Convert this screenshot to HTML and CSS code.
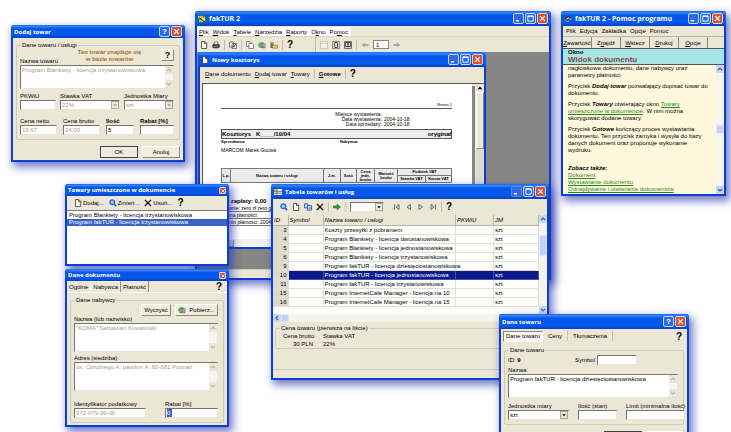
FILE: index.html
```html
<!DOCTYPE html>
<html lang="pl">
<head>
<meta charset="utf-8">
<title>fakTUR 2</title>
<link rel="stylesheet" href="styles.css">
</head>
<body>
<svg class="defs" aria-hidden="true">
  <symbol id="min" viewBox="0 0 10 10"><path d="M2 7.5h3.6" stroke="#fff" stroke-width="1.6"/></symbol>
  <symbol id="max" viewBox="0 0 10 10"><path d="M2 2h6v6H2zM2 2.8h6" fill="none" stroke="#fff" stroke-width="1"/></symbol>
  <symbol id="close" viewBox="0 0 10 10"><path d="M2.4 2.4l5.2 5.2M7.6 2.4L2.4 7.6" stroke="#fff" stroke-width="1.4"/></symbol>
  <symbol id="up" viewBox="0 0 8 8"><path d="M2 5l2-2 2 2" fill="none" stroke="currentColor" stroke-width="1.2"/></symbol>
  <symbol id="down" viewBox="0 0 8 8"><path d="M2 3l2 2 2-2" fill="none" stroke="currentColor" stroke-width="1.2"/></symbol>
  <symbol id="left" viewBox="0 0 8 8"><path d="M5 2L3 4l2 2" fill="none" stroke="currentColor" stroke-width="1.2"/></symbol>
  <symbol id="tri" viewBox="0 0 8 8"><path d="M1.6 3h4.8L4 5.6z" fill="currentColor"/></symbol>
  <symbol id="triup" viewBox="0 0 8 8"><path d="M1.6 5.2h4.8L4 2.6z" fill="currentColor"/></symbol>
  <symbol id="page" viewBox="0 0 8 8"><path d="M1.5.5h3.3l1.900 1.900v5.100H1.500zM4.600.600v2h2" fill="#fff" stroke="#333" stroke-width=".8"/></symbol>
  <symbol id="print" viewBox="0 0 9 8"><path d="M3 .6h4L6 3.400H2z" fill="#fff" stroke="#333" stroke-width=".7"/><path d="M1.400 3h6.600l.7 1.200v2.200L7.400 7.600H1.200L.3 6.400V4.200z" fill="#444"/><path d="M1.400 5.600h5" stroke="#bbb" stroke-width=".6"/></symbol>
  <symbol id="preview" viewBox="0 0 8 8"><path d="M.6 1h4v5h-4zM3 2.600h4.400v5H3z" fill="#fff" stroke="#444" stroke-width=".7"/><path d="M3.400 4.600l1.200 1.600 2.400-3.600" fill="none" stroke="#333" stroke-width=".9"/></symbol>
  <symbol id="copy" viewBox="0 0 8 8"><path d="M.6.6h3.200l1 1v4H.6z" fill="#fff" stroke="#456" stroke-width=".7"/><path d="M3 2.400h3.200l1.200 1.200v4H3z" fill="#fff" stroke="#456" stroke-width=".7"/></symbol>
  <symbol id="copyblue" viewBox="0 0 8 8"><path d="M.5.8h3.400v4H.5z" fill="#cfdcff" stroke="#2347b8" stroke-width=".8"/><path d="M3.400 2.600h4.100v4.600H3.400z" fill="#dfe8ff" stroke="#2347b8" stroke-width=".8"/><path d="M4.400 4.200h2.200M4.400 5.600h2.200" stroke="#2347b8" stroke-width=".6"/></symbol>
  <symbol id="globe" viewBox="0 0 8 8"><circle cx="3.400" cy="4" r="3.100" fill="#5da33c"/><path d="M1 3c1-2 2-1.600 3-2M1.400 5.600l2-1" stroke="#b8dc94" stroke-width=".8" fill="none"/><path d="M4 2.400h3.400v4.800H4z" fill="#7d76b0"/><path d="M4.800 3.600h2M4.800 5h2" stroke="#c8e08a" stroke-width=".7"/></symbol>
  <symbol id="box" viewBox="0 0 8 8"><path d="M.5 1h3v6h-3z" fill="#6d6848"/><path d="M1 1.600h2v1H1z" fill="#d6cf90"/><path d="M2.500 4.200h5v3h-5z" fill="#e6c98a" stroke="#7d6b42" stroke-width=".6"/></symbol>
  <symbol id="lens" viewBox="0 0 8 8"><path d="M4.800 4.800l2.400 2.400" stroke="#234a9c" stroke-width="1.500"/><circle cx="3.300" cy="3.300" r="2.400" fill="#8ecbf4" stroke="#2168d8" stroke-width="1.200"/></symbol>
  <symbol id="cross" viewBox="0 0 8 8"><path d="M1 1l6 6M7 .8L.8 7" stroke="#111" stroke-width="1.200"/></symbol>
  <symbol id="go" viewBox="0 0 9 8"><path d="M.5 2.800h4V.8L8.500 4 4.500 7.200v-2h-4z" fill="#2aa52a" stroke="#146c14" stroke-width=".6"/></symbol>
  <symbol id="back" viewBox="0 0 9 8"><path d="M8.500 3H4.500V1.200L.8 4l3.700 2.800V5h4z" fill="#aaa69a"/></symbol>
  <symbol id="fwd" viewBox="0 0 9 8"><path d="M.5 3h4V1.200L8.200 4 4.500 6.800V5h-4z" fill="#aaa69a"/></symbol>
  <symbol id="v1" viewBox="0 0 8 8"><path d="M.5.5h7v7h-7zM.5 2.500h7" fill="#f4f0e2" stroke="#c3bda8" stroke-width=".8"/></symbol>
  <symbol id="v2" viewBox="0 0 8 8"><path d="M.5.5h7v7h-7z" fill="#ddd9cb" stroke="#777" stroke-width=".8"/><path d="M2.800 1.500h2.600v5H2.800z" fill="#fff" stroke="#222" stroke-width=".8"/></symbol>
  <symbol id="v3" viewBox="0 0 8 8"><path d="M.5.5h7v7h-7z" fill="#ddd9cb" stroke="#555" stroke-width=".8"/><path d="M1.500 1.500H4v4H1.500zM4 1.500h2.500v4H4z" fill="#fff" stroke="#222" stroke-width=".8"/></symbol>
  <symbol id="first" viewBox="0 0 8 8"><path d="M1.500 1.500v5M6 1.500L3 4l3 2.500z" fill="none" stroke="#444" stroke-width=".8"/></symbol>
  <symbol id="prev" viewBox="0 0 8 8"><path d="M5.500 1.500L2 4l3.500 2.500z" fill="none" stroke="#444" stroke-width=".8"/></symbol>
  <symbol id="next" viewBox="0 0 8 8"><path d="M2 1.500L5.500 4 2 6.500z" fill="none" stroke="#444" stroke-width=".8"/></symbol>
  <symbol id="last" viewBox="0 0 8 8"><path d="M6.500 1.500v5M2 1.500L5 4 2 6.500z" fill="none" stroke="#444" stroke-width=".8"/></symbol>
  <symbol id="app" viewBox="0 0 8 8"><path d="M0 0h8v8H0z" fill="#3b6f3c"/><path d="M0 1h5v2.500H0z" fill="#e2bb3e"/><path d="M1 4.500h3v2.500H1z" fill="#7fc0ea"/><path d="M4 3.500l3-2v4l-3 1.500z" fill="#d8d8a0"/><path d="M1 2.500l5 4" stroke="#222" stroke-width=".8"/></symbol>
  <symbol id="book" viewBox="0 0 8 8"><path d="M.5 3.500l4-2.800 3 2-3.800 4.500z" fill="#33304a"/><path d="M2.200 3.400l2.400-1.500 1.200 1-2.400 2z" fill="#e3a24a"/><path d="M.5 3.800L3.600 7l3.900-4" stroke="#ddd" stroke-width=".7" fill="none"/></symbol>
  <symbol id="grid" viewBox="0 0 8 8"><path d="M0 1h8v6H0z" fill="#f6f1d4"/><path d="M0 1h3v2H0z" fill="#eab63f"/><path d="M0 3.400h8M0 5.200h8M3 1v6" stroke="#55554a" stroke-width=".7"/></symbol>
</svg>
<main class="desktop">

  <section class="win faktur">
    <header class="title"><svg class="ico"><use href="#app"/></svg><h1>fakTUR 2</h1>
      <button class="cap" aria-label="Minimalizuj"><svg><use href="#min"/></svg></button><button class="cap" aria-label="Maksymalizuj"><svg><use href="#max"/></svg></button><button class="cap red" aria-label="Zamknij"><svg><use href="#close"/></svg></button></header>
    <nav class="menu"><div class="menu-items"><button><u>P</u>lik</button><button><u>W</u>idok</button><button><u>T</u>abele</button><button><u>N</u>arzędzia</button><button><u>R</u>aporty</button><button>O<u>k</u>no</button><button>Po<u>m</u>oc</button></div></nav>
    <div class="bar main-bar">
      <button aria-label="Nowy"><svg class="ico"><use href="#page"/></svg></button>
      <button aria-label="Drukuj"><svg class="ico"><use href="#print"/></svg></button>
      <i class="sep"></i>
      <button aria-label="Podgląd"><svg class="ico"><use href="#preview"/></svg></button>
      <i class="sep"></i>
      <button aria-label="Dokumenty"><svg class="ico"><use href="#copy"/></svg></button>
      <button aria-label="Kontrahenci"><svg class="ico"><use href="#globe"/></svg></button>
      <button aria-label="Towary"><svg class="ico"><use href="#box"/></svg></button>
      <i class="sep"></i>
      <button class="help">?</button>
      <i class="sep wide"></i>
      <button aria-label="Szerokość"><svg class="ico"><use href="#v1"/></svg></button>
      <button aria-label="Strona"><svg class="ico"><use href="#v2"/></svg></button>
      <button aria-label="Dwie strony"><svg class="ico"><use href="#v3"/></svg></button>
      <i class="sep"></i>
      <button aria-label="Wstecz"><svg class="ico"><use href="#back"/></svg></button>
      <input class="num" aria-label="Numer strony" value="1">
      <button aria-label="Dalej"><svg class="ico"><use href="#fwd"/></svg></button>
    </div>
    <div class="mdi"></div>
    <footer class="status"></footer>
  </section>

  <section class="win kosztorys">
    <header class="title"><svg class="ico"><use href="#page"/></svg><h2>Nowy kosztorys</h2>
      <button class="cap" aria-label="Minimalizuj"><svg><use href="#min"/></svg></button><button class="cap" aria-label="Maksymalizuj"><svg><use href="#max"/></svg></button><button class="cap red" aria-label="Zamknij"><svg><use href="#close"/></svg></button></header>
    <div class="bar doc-bar"><button><span><u>D</u>ane dokumentu</span></button><button><span><u>D</u>odaj towar</span></button><button><span><u>T</u>owary</span></button><i class="sep"></i><button><b><u>G</u>otowe</b></button><i class="sep"></i><button class="help">?</button></div>
    <div class="doc-view">
      <article class="sheet">
        <div class="page-no">Strona 1</div>
        <dl class="meta"><dt>Miejsce wystawienia:</dt><dd></dd><dt>Data wystawienia:</dt><dd>2004-10-18</dd><dt>Data sprzedaży:</dt><dd>2004-10-18</dd></dl>
        <h3 class="doc-head"><span>Kosztorys &nbsp; K____/10/04</span><span>oryginał</span></h3>
        <div class="parties"><span>Sprzedawca:</span><span>Nabywca:</span></div>
        <p class="seller">MARCOM Marek Gucwa</p>
        <table class="items">
          <colgroup><col class="c1"><col><col class="c3"><col class="c4"><col class="c5"><col class="c6"><col class="c7"><col class="c8"></colgroup>
          <tr><th rowspan="2">L.p.</th><th rowspan="2">Nazwa towaru i usługi</th><th rowspan="2">J.m.</th><th rowspan="2">Ilość</th><th rowspan="2">Cena jedn. brutto</th><th rowspan="2">Wartość brutto</th><th colspan="2">Podatek VAT</th></tr>
          <tr><th>Stawka VAT</th><th>Kwota VAT</th></tr>
        </table>
        <p class="total">Do zapłaty: 0,00</p>
        <p class="line">Słownie: zero zł zero gr</p>
        <p class="line">Forma płatności:</p>
        <p class="line">Termin płatności: 2004-10-18</p>
      </article>
      <div class="page-shade"></div>
      <div class="vscroll classic"><svg><use href="#triup"/></svg><i class="thumb"></i></div>
    </div>
    <div class="hscroll classic"><i class="thumb"></i></div>
  </section>

  <section class="win dodaj">
    <header class="title"><h2>Dodaj towar</h2><button class="cap" aria-label="Pomoc"><span>?</span></button><button class="cap red" aria-label="Zamknij"><svg><use href="#close"/></svg></button></header>
    <form class="form">
      <fieldset>
        <legend>Dane towaru / usługi</legend>
        <div class="lead"><label for="nazwa">Nazwa towaru</label><strong>Ten towar znajduje się<br>w bazie towarów</strong><button type="button" class="btn square">?</button></div>
        <div class="area dim"><textarea id="nazwa">Program Blankiety - licencja trzystanowiskowa</textarea><div class="asb"><svg><use href="#up"/></svg><svg><use href="#down"/></svg></div></div>
        <div class="fields f-a">
          <div><label for="pkwiu">PKWiU</label><input id="pkwiu"></div>
          <div><label for="vat">Stawka VAT</label><div class="sel dim"><select id="vat"><option>22%</option></select><svg><use href="#tri"/></svg></div></div>
          <div><label for="jm">Jednostka Miary</label><div class="sel dim"><select id="jm"><option>szt</option></select><svg><use href="#tri"/></svg></div></div>
        </div>
        <div class="fields f-b">
          <div class="dim"><label for="netto">Cena netto</label><input id="netto" value="19,67"></div>
          <div class="dim"><label for="brutto">Cena brutto</label><input id="brutto" value="24,00"></div>
          <div><label for="ilosc"><b>Ilość</b></label><input id="ilosc" value="5"></div>
          <div><label for="rabat"><b>Rabat [%]</b></label><input id="rabat"></div>
        </div>
      </fieldset>
      <div class="actions"><button type="button" class="btn default">OK</button><button type="button" class="btn">Anuluj</button></div>
    </form>
  </section>

  <section class="win tabela">
    <header class="title"><svg class="ico"><use href="#grid"/></svg><h2>Tabela towarów i usług</h2>
      <button class="cap off" aria-label="Minimalizuj"><svg><use href="#min"/></svg></button><button class="cap" aria-label="Maksymalizuj"><svg><use href="#max"/></svg></button><button class="cap red" aria-label="Zamknij"><svg><use href="#close"/></svg></button></header>
    <div class="bar tab-bar">
      <button aria-label="Szukaj"><svg class="ico"><use href="#lens"/></svg></button>
      <button aria-label="Nowy"><svg class="ico"><use href="#page"/></svg></button>
      <button aria-label="Kopiuj"><svg class="ico"><use href="#copyblue"/></svg></button>
      <button aria-label="Usuń"><svg class="ico"><use href="#cross"/></svg></button>
      <i class="sep"></i>
      <button aria-label="Przejdź"><svg class="ico"><use href="#go"/></svg></button>
      <i class="sep"></i>
      <div class="sel"><select aria-label="Filtr"><option></option></select><svg><use href="#tri"/></svg></div>
      <i class="sep none"></i>
      <button aria-label="Pierwszy"><svg class="ico"><use href="#first"/></svg></button>
      <button aria-label="Poprzedni"><svg class="ico"><use href="#prev"/></svg></button>
      <button aria-label="Następny"><svg class="ico"><use href="#next"/></svg></button>
      <button aria-label="Ostatni"><svg class="ico"><use href="#last"/></svg></button>
      <i class="sep"></i>
      <button class="help">?</button>
    </div>
    <div class="grid-wrap">
      <div class="grid-main"><table class="goods">
        <colgroup><col class="g1"><col class="g2"><col><col class="g4"><col class="g5"></colgroup>
        <thead><tr><th>ID</th><th>Symbol</th><th>Nazwa towaru / usługi</th><th>PKWiU</th><th>JM</th></tr></thead>
        <tbody>
          <tr><td>3</td><td></td><td>Koszty przesyłki z pobraniem</td><td></td><td>szt</td></tr>
          <tr><td>4</td><td></td><td>Program Blankiety - licencja dwustanowiskowa</td><td></td><td>szt</td></tr>
          <tr><td>5</td><td></td><td>Program Blankiety - licencja jednostanowiskowa</td><td></td><td>szt</td></tr>
          <tr><td>6</td><td></td><td>Program Blankiety - licencja trzystanowiskowa</td><td></td><td>szt</td></tr>
          <tr><td>9</td><td></td><td>Program fakTUR - licencja dziesięciostanowiskowa</td><td></td><td>szt</td></tr>
          <tr class="on"><td>10</td><td></td><td>Program fakTUR - licencja jednostanowiskowa</td><td></td><td>szt</td></tr>
          <tr><td>11</td><td></td><td>Program fakTUR - licencja trzystanowiskowa</td><td></td><td>szt</td></tr>
          <tr><td>15</td><td></td><td>Program InternetCafe Manager - licencja na 10</td><td></td><td>szt</td></tr>
          <tr><td>16</td><td></td><td>Program InternetCafe Manager - licencja na 15</td><td></td><td>szt</td></tr>
        </tbody>
      </table></div>
      <div class="vscroll xp"><svg><use href="#up"/></svg><i class="thumb"></i><svg><use href="#down"/></svg></div>
    </div>
    <div class="hscroll xp"><svg><use href="#left"/></svg><i class="thumb"></i></div>
    <div class="price">
      <fieldset><legend>Cena towaru (pierwsza na liście)</legend>
        <dl><dt>Cena brutto</dt><dt>Stawka VAT</dt><dd>30 PLN</dd><dd>22%</dd></dl>
      </fieldset>
    </div>
    <footer class="status"></footer>
  </section>

  <section class="win small towary">
    <header class="title"><h2>Towary umieszczone w dokumencie</h2><button class="cap red" aria-label="Zamknij"><svg><use href="#close"/></svg></button></header>
    <div class="bar list-bar"><button><svg class="ico"><use href="#page"/></svg>Dodaj...</button><button><svg class="ico"><use href="#lens"/></svg>Zmień...</button><button><svg class="ico"><use href="#cross"/></svg>Usuń...</button><button class="help">?</button></div>
    <ul class="list"><li>Program Blankiety - licencja trzystanowiskowa</li><li class="on">Program fakTUR - licencja trzystanowiskowa</li></ul>
  </section>

  <section class="win small nabywca">
    <header class="title"><h2>Dane dokumentu</h2><button class="cap red" aria-label="Zamknij"><svg><use href="#close"/></svg></button></header>
    <div class="tabs"><button>Ogólne</button><button class="on">Nabywca</button><button class="edge">Płatność</button><button class="help">?</button></div>
    <form class="form">
      <fieldset>
        <legend>Dane nabywcy</legend>
        <div class="pick"><button type="button" class="btn">Wyczyść</button><button type="button" class="btn"><svg class="ico"><use href="#globe"/></svg>Pobierz...</button></div>
        <label for="nab">Nazwa (lub nazwisko)</label>
        <div class="area tall dim"><textarea id="nab">"KOMA" Sebastian Kowaliński</textarea><div class="asb"><svg><use href="#up"/></svg><svg><use href="#down"/></svg></div></div>
        <label for="adr" class="second">Adres (siedziba)</label>
        <div class="area tall dim"><textarea id="adr">os. Chrobrego A, pawilon A, 60-681 Poznań</textarea><div class="asb"><svg><use href="#up"/></svg><svg><use href="#down"/></svg></div></div>
        <div class="fields f-c">
          <div class="dim"><label for="nip">Identyfikator podatkowy</label><input id="nip" value="972-079-99-06"></div>
          <div><label for="rab2">Rabat [%]</label><div class="fake"><input id="rab2" class="marked" value="0" size="1"></div></div>
        </div>
      </fieldset>
    </form>
  </section>

  <section class="win towar">
    <header class="title"><h2>Dane towaru</h2><button class="cap" aria-label="Pomoc"><span>?</span></button><button class="cap red" aria-label="Zamknij"><svg><use href="#close"/></svg></button></header>
    <div class="tabs flat"><button class="on">Dane towaru</button><button>Ceny</button><i class="sep"></i><button>Tłumaczenia</button><i class="sep"></i><button class="help">?</button></div>
    <form class="form">
      <fieldset>
        <legend>Dane towaru</legend>
        <div class="idrow"><span>ID: <b>9</b></span><label for="sym">Symbol</label><input id="sym"></div>
        <label for="naz2">Nazwa</label>
        <div class="area"><textarea id="naz2">Program fakTUR - licencja dziesięciostanowiskowa</textarea><div class="asb"><svg><use href="#up"/></svg><svg><use href="#down"/></svg></div></div>
        <div class="fields f-d">
          <div><label for="jm2">Jednostka miary</label><div class="sel"><select id="jm2"><option>szt</option></select><svg><use href="#tri"/></svg></div></div>
          <div><label for="stan">Ilość (stan)</label><input id="stan"></div>
          <div><label for="lim">Limit (minimalna ilość)</label><input id="lim"></div>
        </div>
      </fieldset>
      <div class="actions"><button type="button" class="btn default" aria-label="OK"></button><button type="button" class="btn" aria-label="Anuluj"></button></div>
    </form>
  </section>

  <section class="win pomoc">
    <header class="title"><svg class="ico"><use href="#book"/></svg><h2>fakTUR 2 - Pomoc programu</h2>
      <button class="cap" aria-label="Minimalizuj"><svg><use href="#min"/></svg></button><button class="cap" aria-label="Maksymalizuj"><svg><use href="#max"/></svg></button><button class="cap red" aria-label="Zamknij"><svg><use href="#close"/></svg></button></header>
    <nav class="menu beige"><button>Plik</button><button>Edycja</button><button>Zakładka</button><button>Opcje</button><button>Pomoc</button></nav>
    <div class="hbuttons"><button><u>Z</u>awartość</button><button>Z<u>n</u>ajdź</button><button><u>W</u>stecz</button><button><u>D</u>rukuj</button><button><u>O</u>pcje</button></div>
    <div class="topic"><p>Okno</p><h3>Widok dokumentu</h3></div>
    <div class="help-body">
      <div class="help-text">
        <p>nagłówkowe dokumentu, dane nabywcy oraz<br>parametry płatności.</p>
        <p>Przycisk <b><em>Dodaj towar</em></b> pozwalający dopisać towar do<br>dokumentu.</p>
        <p>Przycisk <b><em>Towary</em></b> otwierający okno <a href="#towary">Towary<br>umieszczone w dokumencie</a>. W nim można<br>skorygować dodane towary.</p>
        <p>Przycisk <b><em>Gotowe</em></b> kończący proces wystawiania<br>dokumentu. Ten przycisk zamyka i wysyła do bazy<br>danych dokument oraz proponuje wykonanie<br>wydruku.</p>
        <p class="also"><b><em>Zobacz także:</em></b><br><a href="#dokument">Dokument</a><br><a href="#wystawianie">Wystawianie dokumentu</a><br><a href="#odnajdywanie">Odnajdywanie i otwieranie dokumentów</a></p>
      </div>
      <div class="vscroll xp mid"><svg><use href="#up"/></svg><i class="thumb"></i><svg><use href="#down"/></svg></div>
    </div>
  </section>
</main>
</body>
</html>
```
FILE: styles.css
```css
:root {
  --ui: "Liberation Sans", sans-serif;
  --beige: #ece6d6;
  --blue: #0a3fd0;
}
* { box-sizing: border-box; margin: 0; padding: 0; }
body { background: #fff; font: 6px/8px var(--ui); color: #000; }
button, input, select, textarea { font: inherit; color: inherit; border: 0; background: none; }
textarea { resize: none; display: block; overflow: hidden; }
svg { display: block; width: 8px; height: 8px; flex: none; }
.defs { position: absolute; width: 0; height: 0; }
h1, h2, h3 { font-size: inherit; }
.desktop { position: relative; min-height: 100vh; overflow: hidden; }

/* windows */
.win {
  position: absolute; display: flex; flex-direction: column;
  background: var(--beige); border: 2px solid var(--blue); border-top: 0;
  border-radius: 3px 3px 0 0;
  box-shadow: 3px 4px 8px 1px rgba(40, 50, 170, .65);
}
.faktur { left: 195px; top: 11px; width: 356px; height: 269px; }
.kosztorys { left: 198px; top: 52px; width: 288px; height: 197px; box-shadow: none; }
.dodaj { left: 11px; top: 25px; width: 174px; height: 137px; }
.tabela { left: 271px; top: 184px; width: 278px; height: 196px; }
.towary { left: 65px; top: 184px; width: 164px; height: 82px; }
.nabywca { left: 65px; top: 269px; width: 164px; height: 158px; }
.towar { left: 499px; top: 314px; width: 190px; height: 134px; }
.pomoc { left: 561px; top: 11px; width: 165px; height: 185px; }

.title {
  display: flex; align-items: center; gap: 1px; height: 15px; flex: none;
  margin: 0 -2px; padding: 0 3px; border-radius: 3px 3px 0 0; color: #fff;
  background: linear-gradient(#1c62e6, #2f86ff 12%, #0555e8 28%, #0459ee 75%, #0241c0);
}
.title h1, .title h2 { flex: 1; font: bold 6px/10px "Open Sans", sans-serif; white-space: nowrap; padding-left: 2px; }
.title h1, .pomoc .title h2 { font-size: 7px; }
.dodaj .title h2, .small .title h2, .towar .title h2 { padding-left: 0; }
.dodaj .title { height: 13px; }
.small .title { height: 12px; }
.cap {
  width: 11px; height: 11px; border: 1px solid #c6d6fa; border-radius: 2px; flex: none;
  background: #2f68e4; display: grid; place-items: center; font: bold 8px/9px "Liberation Sans", sans-serif;
}
.cap svg { width: 9px; height: 9px; }
.cap.red { background: #dd4f2b; }
.cap.off { border-color: #5c86ea; }
.small .cap { width: 7px; height: 7px; border-radius: 1px; }
.small .cap svg { width: 6px; height: 6px; }

/* menus and bars */
.menu { display: flex; height: 10px; align-items: center; flex: none; }
.menu-items { display: flex; background: #fff; gap: 4px; padding: 1px 3px 0 2px; height: 9px; }
.menu.beige { gap: 4px; padding-left: 3px; }
.bar { display: flex; align-items: center; flex: none; height: 15px; gap: 5px; white-space: nowrap; }
.bar button { display: flex; align-items: center; gap: 1px; }
.bar .help, .tabs .help { font: bold 10px/12px "Liberation Sans", sans-serif; }
.sep { width: 1px; height: 10px; background: #c5c0ac; }
.main-bar { padding-left: 3px; height: 16px; gap: 4px; border-top: 1px solid #d8d4c2; }
.main-bar .wide { margin: 0 0 0 18px; height: 15px; }
.main-bar .num { width: 16px; height: 9px; background: #fff; border: 1px solid #8a8778; padding-left: 2px; }
.mdi { flex: 1; background: #868686; }
.status { height: 9px; flex: none; border-top: 1px solid #cfcab6; }
.doc-bar { padding-left: 5px; height: 14px; gap: 4px; }

/* document */
.doc-view { flex: 1; display: flex; min-height: 0; overflow: hidden; margin: 2px 0 0 2px; border-top: 1px solid #555; border-left: 1px solid #555; }
.sheet { flex: 1; background: #fff; padding: 16px 20px 0 18px; font: 5px/6px "Liberation Sans", sans-serif; }
.page-no { text-align: right; border-bottom: 1px solid #555; height: 9px; padding-top: 2px; font-size: 4px; }
.meta { display: grid; grid-template-columns: 161px 1fr; column-gap: 2px; grid-auto-rows: 5px; line-height: 5px; padding-top: 3px; }
.meta dt { text-align: right; }
.doc-head { display: flex; justify-content: space-between; border: 1px solid #555; background: #ececec; margin-top: 2px; font: bold 6px/8px "Liberation Sans", sans-serif; }
.parties { display: grid; grid-template-columns: 119px 1fr; font-size: 4px; font-weight: bold; }
.seller { height: 23px; padding-top: 2px; }
.items { width: 100%; border-collapse: collapse; table-layout: fixed; background: #ececec; font-size: 4px; line-height: 4px; }
.items th { border: 1px solid #777; height: 7px; overflow: hidden; }
.c1 { width: 9px; } .c3 { width: 17px; } .c4 { width: 16px; } .c5 { width: 18px; } .c6 { width: 23px; } .c7 { width: 28px; } .c8 { width: 26px; }
.total { font: bold 6px/8px "Liberation Sans", sans-serif; margin-top: 14px; }
.line { line-height: 6px; border-bottom: 1px solid #777; }
.page-shade { width: 3px; background: #858585; margin-top: 2px; }
.vscroll { display: flex; flex-direction: column; width: 8px; flex: none; }
.vscroll .thumb { display: block; }
.classic.vscroll { background: #dcdad2; margin-left: 1px; }
.classic.vscroll svg { background: var(--beige); }
.classic .thumb { height: 57px; background: #ece6d6; border: 1px solid #fff; border-right-color: #888; border-bottom-color: #888; }
.hscroll { display: flex; height: 8px; flex: none; }
.hscroll.classic { background: #f2f1ec; }
.hscroll.classic .thumb { width: 34px; height: 8px; background: #dcdad2; }
.xp { color: #3f5fae; background: #f5f4ef; }
.xp svg { background: #c8d6fb; border-radius: 1px; }
.xp .thumb { background: #c4d2fb; border: 1px solid #dfe7ff; border-radius: 1px; }

/* forms */
.form { flex: 1; padding: 4px 3px 0; }
fieldset { border: 1px solid #cfcbb8; border-radius: 2px; padding: 0 5px 4px 3px; min-width: 0; }
legend { margin-left: 1px; padding: 0 1px; height: 7px; line-height: 7px; }
label { display: block; height: 8px; white-space: nowrap; }
input { display: block; width: 100%; height: 10px; }
.fields input, .idrow input, .sel, .area, .fake {
  background: #fff; border: 1px solid #77756a; border-right-color: #e8e5d6; border-bottom-color: #e8e5d6; padding-left: 1px;
}
.sel { display: flex; align-items: center; height: 10px; }
.sel select { flex: 1; min-width: 0; height: 8px; appearance: none; }
.sel svg { background: var(--beige); border: 1px solid #aaa799; }
.area { display: flex; height: 24px; }
.area textarea { flex: 1; min-width: 0; height: 100%; }
.area.tall { height: 29px; }
.asb { display: flex; flex-direction: column; justify-content: space-between; background: #f6f5f0; color: #b9b6a8; }
.asb svg { background: var(--beige); }
.dim input, .dim textarea, .dim select, .sel.dim { color: #a09d90; }
.fields { display: grid; column-gap: 4px; }
.f-a { grid-template-columns: 36px 60px 1fr; padding-top: 3px; }
.f-b { grid-template-columns: 37px 37px 28px 1fr; column-gap: 6px; padding-top: 7px; }
.f-c { grid-template-columns: 72px 1fr; column-gap: 19px; padding-top: 9px; }
.f-d { grid-template-columns: 61px 39px 1fr; column-gap: 9px; padding-top: 4px; }
.lead { display: flex; align-items: flex-end; justify-content: space-between; height: 16px; }
.lead strong { align-self: flex-start; text-align: center; color: #a9701c; font: bold 6px/7px "Liberation Sans", sans-serif; }
.btn {
  display: flex; align-items: center; justify-content: center; gap: 3px; height: 12px; width: 38px;
  background: #f0ecdf; border: 1px solid #fff; border-right-color: #8b887a; border-bottom-color: #8b887a;
}
.btn.default { border-color: #444; }
.btn.square { width: 13px; align-self: flex-start; font: bold 9px/10px "Liberation Sans", sans-serif; }
.actions { display: flex; justify-content: flex-end; gap: 4px; padding-top: 6px; }
.pick { display: flex; justify-content: flex-end; gap: 4px; margin-bottom: -1px; }
.pick .btn:first-child { width: 30px; }
.pick .btn:last-child { width: 43px; }
.second { margin-top: 2px; }
.fake input { width: 5px; height: 8px; }
.fake .marked { background: #3a63c8; color: #fff; border: 0; padding: 0; }
.idrow { display: flex; align-items: center; height: 12px; }
.idrow span { width: 67px; }
.idrow label { width: 22px; }
.idrow input { width: 40px; }

/* tabs */
.tabs { display: flex; align-items: center; height: 12px; flex: none; padding: 0 5px 0 0; border-bottom: 1px solid #fff; }
.tabs button { padding: 0 2px; height: 11px; }
.tabs .on { border: 1px solid #fff; border-right-color: #8b887a; border-bottom: 0; }
.tabs .edge { border-right: 1px solid #8b887a; }
.tabs .help { margin-left: auto; padding: 0; }
.flat { height: 14px; gap: 3px; padding-left: 2px; border: 0; }
.flat .on { background: #f8f7f0; border: 1px solid #8b887a; border-right-color: #fff; border-bottom: 1px solid #fff; }

/* goods table */
.tab-bar { padding-left: 7px; height: 16px; gap: 4px; }
.tab-bar .sel { width: 34px; }
.tab-bar .none { background: none; }
.grid-wrap { display: flex; background: #fff; height: 99px; flex: none; }
.grid-main { flex: 1; min-width: 0; }
.goods { width: 100%; border-collapse: collapse; table-layout: fixed; }
.g1 { width: 15px; } .g2 { width: 35px; } .g4 { width: 38px; } .g5 { width: 45px; }
.goods th, .goods td { height: 9px; line-height: 8px; padding: 0 1px; white-space: nowrap; text-align: left; border-right: 1px solid #e2dfd0; border-bottom: 1px solid #e2dfd0; }
.goods th { height: 10px; background: var(--beige); font-style: italic; font-weight: normal; border-color: #b9b5a2; }
.goods td:first-child { background: #dedbcd; text-align: right; }
.goods .on td:not(:first-child) { background: #0a1a8c; color: #fff; border-color: #4450a0; }
.tabela .thumb { width: 8px; height: 21px; }
.tabela .vscroll .thumb { margin: 12px 0 auto; }
.tabela .hscroll .thumb { height: 8px; }
.price { flex: 1; padding: 3px 2px 0; }
.price dl { display: grid; grid-template-columns: 30px 1fr; column-gap: 10px; padding-left: 4px; white-space: nowrap; }
.price fieldset { padding-bottom: 0; }
.price dd:nth-of-type(1) { text-align: right; }

/* list window */
.list-bar { padding-left: 7px; gap: 5px; height: 14px; }
.list { flex: 1; list-style: none; background: #fff; border-top: 1px solid #777; padding-top: 1px; }
.list li { height: 7px; line-height: 7px; padding-left: 2px; }
.list .on { background: #3a63c8; color: #fff; }

/* help viewer */
.hbuttons { display: flex; height: 12px; border-top: 1px solid #bbb7a5; flex: none; }
.hbuttons button { width: 29px; border-right: 1px solid #8b887a; }
.topic { background: #a8e6e4; border-top: 1px solid #555; border-bottom: 1px solid #555; padding: 0 5px; font: bold 6px/7px "Liberation Sans", sans-serif; flex: none; height: 17px; }
.topic h3 { color: #8c4747; font: bold 8px/8px "Liberation Sans", sans-serif; }
.help-body { flex: 1; display: flex; min-height: 0; background: #fff8dc; }
.help-text { flex: 1; padding-left: 5px; font: 6px/7px "Liberation Sans", sans-serif; display: flex; flex-direction: column; gap: 4px; white-space: nowrap; overflow: hidden; }
.help-text a { color: #2c8a1c; }
.also { margin-top: 7px; }
.mid { justify-content: space-between; }
.mid .thumb { height: 9px; }
```
